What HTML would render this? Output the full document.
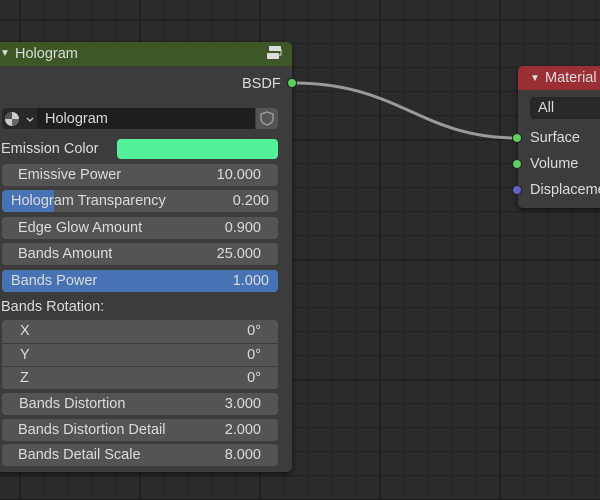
<!DOCTYPE html><html><head><style>
*{margin:0;padding:0;box-sizing:border-box}
body{width:600px;height:500px;overflow:hidden;position:relative;font-family:"Liberation Sans",sans-serif;font-size:14.5px;color:#dcdcdc;
background-color:#2b2b2b;
background-image:linear-gradient(#1d1d1d 1.5px,transparent 1.5px),linear-gradient(90deg,#1d1d1d 1.5px,transparent 1.5px),linear-gradient(#212121 1px,transparent 1px),linear-gradient(90deg,#212121 1px,transparent 1px);
background-size:120px 120px,120px 120px,24px 24px,24px 24px;
background-position:0 19px,19px 0,0 19px,19px 0;}
.node{position:absolute;background:#3c3c3c;border-radius:5px;box-shadow:0 2px 6px rgba(0,0,0,.6)}
.hdr{position:absolute;left:0;right:0;top:0;height:24px;border-radius:5px 5px 0 0}
.t{position:absolute;white-space:nowrap}
.f{position:absolute;left:2px;width:276px;height:22px;background:#545454;border-radius:4px}
.f span{position:absolute;top:3px}
.f .v{right:17px}
.dot{position:absolute;width:10px;height:10px;border-radius:50%;background:#5fd05f;border:1px solid #222}
</style></head><body>
<svg style="position:absolute;left:0;top:0" width="600" height="500"><path d="M293 83 C400 83,420 138,517 138" stroke="#9a9a9a" stroke-width="3" fill="none"/></svg>
<div class="node" style="left:-10px;top:42px;width:302px;height:430px">
<div class="hdr" style="background:#3d5727"></div>
</div>
<div class="t" style="left:0;top:48px;font-size:10px;color:#ddd">▼</div>
<div class="t" style="left:15px;top:46px">Hologram</div>
<svg style="position:absolute;left:266px;top:45px" width="18" height="16"><rect x="3" y="1" width="12" height="5" rx="1" fill="#ddd"/><rect x="1" y="8" width="12" height="6" rx="1" fill="#ddd"/><path d="M15 4v6h-2" stroke="#ddd" fill="none"/></svg>
<div class="t" style="left:242px;top:76px">BSDF</div>
<div class="dot" style="left:287px;top:78px"></div>
<div style="position:absolute;left:2px;top:108px;width:35px;height:21px;background:#282828;border-radius:4px 0 0 4px"></div>
<svg style="position:absolute;left:3px;top:110px" width="32" height="18"><circle cx="9" cy="9" r="7" fill="#ccc"/><path d="M9 9L9 2A7 7 0 0 0 2 9Z" fill="#555"/><path d="M9 9L16 9A7 7 0 0 1 9 16Z" fill="#666"/><path d="M24 8l3 3 3-3" stroke="#ccc" fill="none" stroke-width="1.3"/></svg>
<div style="position:absolute;left:37px;top:108px;width:218px;height:21px;background:#1e1e1e"></div>
<div class="t" style="left:45px;top:111px">Hologram</div>
<div style="position:absolute;left:256px;top:108px;width:22px;height:21px;background:#545454;border-radius:0 4px 4px 0"></div>
<svg style="position:absolute;left:259px;top:110px" width="16" height="17"><path d="M8 2L14 4V9C14 12 11 14 8 15C5 14 2 12 2 9V4Z" stroke="#999" stroke-width="1.5" fill="none"/></svg>
<div class="t" style="left:1px;top:141px">Emission Color</div>
<div style="position:absolute;left:117px;top:139px;width:161px;height:20px;background:#55f09a;border-radius:4px"></div>
<div class="f" style="top:164px"><span style="left:16px">Emissive Power</span><span class="v">10.000</span></div>
<div class="f" style="top:190px"><div style="position:absolute;left:0;top:0;width:52px;height:22px;background:#4772b3;border-radius:4px 0 0 4px"></div><span style="left:9px">Hologram Transparency</span><span class="v" style="right:9px">0.200</span></div>
<div class="f" style="top:217px"><span style="left:16px">Edge Glow Amount</span><span class="v">0.900</span></div>
<div class="f" style="top:243px"><span style="left:16px">Bands Amount</span><span class="v">25.000</span></div>
<div class="f" style="top:270px;background:#4772b3"><span style="left:9px">Bands Power</span><span class="v" style="right:9px">1.000</span></div>
<div class="t" style="left:1px;top:299px">Bands Rotation:</div>
<div class="f" style="top:320px;height:23px;border-radius:4px 4px 0 0"><span style="left:18px">X</span><span class="v">0°</span></div>
<div class="f" style="top:344px;height:22px;border-radius:0"><span style="left:18px">Y</span><span class="v">0°</span></div>
<div class="f" style="top:367px;height:22px;border-radius:0 0 4px 4px"><span style="left:18px">Z</span><span class="v">0°</span></div>
<div class="f" style="top:393px"><span style="left:17px">Bands Distortion</span><span class="v">3.000</span></div>
<div class="f" style="top:419px"><span style="left:16px">Bands Distortion Detail</span><span class="v">2.000</span></div>
<div class="f" style="top:444px"><span style="left:16px">Bands Detail Scale</span><span class="v">8.000</span></div>

<div class="node" style="left:518px;top:66px;width:100px;height:142px">
<div class="hdr" style="background:#9a2f36"></div>
</div>
<div class="t" style="left:530px;top:73px;font-size:10px">▼</div>
<div class="t" style="left:545px;top:70px">Material</div>
<div style="position:absolute;left:530px;top:97px;width:80px;height:22px;background:#282828;border-radius:4px"></div>
<div class="t" style="left:538px;top:100px">All</div>
<div class="dot" style="left:512px;top:133px"></div>
<div class="t" style="left:530px;top:130px">Surface</div>
<div class="dot" style="left:512px;top:159px"></div>
<div class="t" style="left:530px;top:156px">Volume</div>
<div class="dot" style="left:512px;top:185px;background:#6363c7"></div>
<div class="t" style="left:530px;top:182px">Displacement</div>
</body></html>
